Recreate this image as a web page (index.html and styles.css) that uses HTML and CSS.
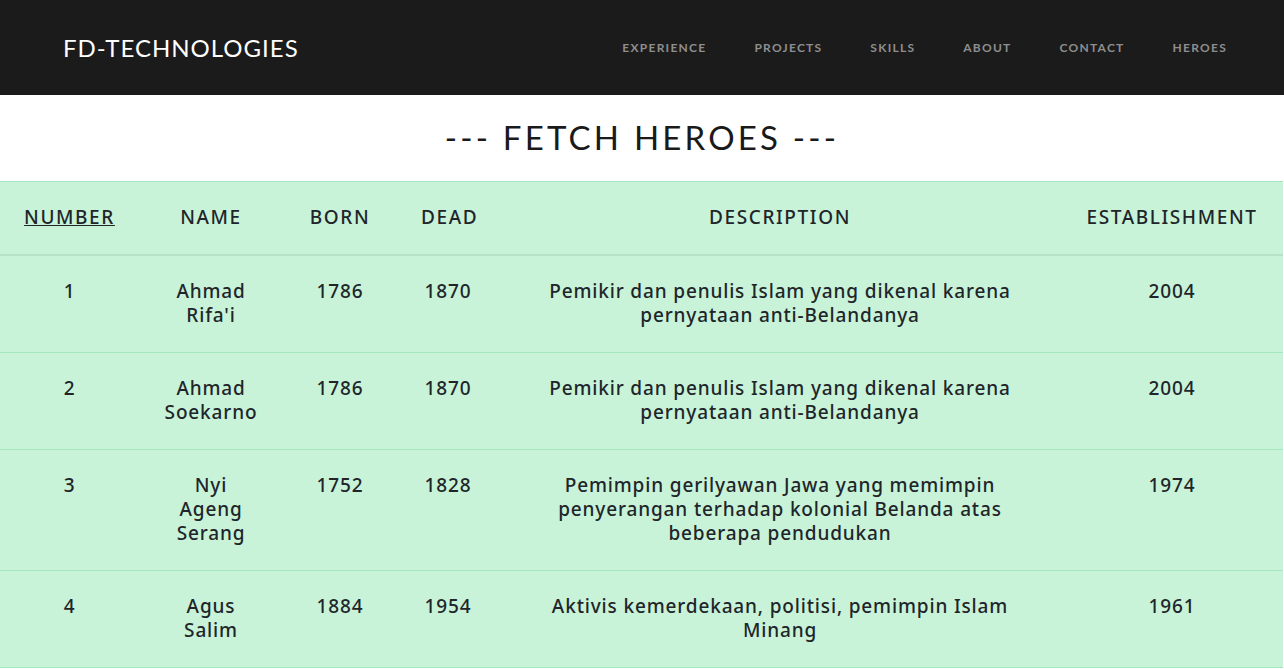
FILE: index.html
```html
<!DOCTYPE html>
<html lang="id">
<head>
<meta charset="utf-8">
<title>FD-Technologies - Heroes</title>
<link rel="stylesheet" href="styles.css">
</head>
<body>
<nav class="navbar">
  <a class="brand" href="#">FD-TECHNOLOGIES</a>
  <ul class="nav-links">
    <li><a href="#">Experience</a></li>
    <li><a href="#">Projects</a></li>
    <li><a href="#">Skills</a></li>
    <li><a href="#">About</a></li>
    <li><a href="#">Contact</a></li>
    <li><a href="#">Heroes</a></li>
  </ul>
</nav>
<h1 class="page-title">--- FETCH HEROES ---</h1>
<table class="heroes">
  <colgroup>
    <col class="c-num"><col class="c-name"><col class="c-born"><col class="c-dead"><col class="c-desc"><col class="c-est">
  </colgroup>
  <thead>
    <tr>
      <th><a href="#" class="sort">Number</a></th>
      <th>Name</th>
      <th>Born</th>
      <th>Dead</th>
      <th>Description</th>
      <th>Establishment</th>
    </tr>
  </thead>
  <tbody>
    <tr>
      <td>1</td>
      <td>Ahmad Rifa'i</td>
      <td>1786</td>
      <td>1870</td>
      <td>Pemikir dan penulis Islam yang dikenal karena pernyataan anti-Belandanya</td>
      <td>2004</td>
    </tr>
    <tr>
      <td>2</td>
      <td>Ahmad Soekarno</td>
      <td>1786</td>
      <td>1870</td>
      <td>Pemikir dan penulis Islam yang dikenal karena pernyataan anti-Belandanya</td>
      <td>2004</td>
    </tr>
    <tr>
      <td>3</td>
      <td>Nyi Ageng Serang</td>
      <td>1752</td>
      <td>1828</td>
      <td>Pemimpin gerilyawan Jawa yang memimpin penyerangan terhadap kolonial Belanda atas beberapa pendudukan</td>
      <td>1974</td>
    </tr>
    <tr>
      <td>4</td>
      <td>Agus Salim</td>
      <td>1884</td>
      <td>1954</td>
      <td>Aktivis kemerdekaan, politisi, pemimpin Islam Minang</td>
      <td>1961</td>
    </tr>
  </tbody>
</table>
</body>
</html>
```

FILE: styles.css
```css
* { box-sizing: border-box; }

html, body {
  margin: 0;
  padding: 0;
  background: #ffffff;
  font-family: "Lato", "Noto Sans", sans-serif;
  color: #212529;
}

.navbar {
  height: 95px;
  background: #1b1b1b;
  display: flex;
  align-items: center;
  justify-content: space-between;
  padding: 0 33px 0 63px;
}

.brand {
  color: #ffffff;
  text-decoration: none;
  font-size: 24px;
  font-weight: 400;
  letter-spacing: 1px;
}

.nav-links {
  list-style: none;
  margin: 0;
  padding: 0;
  display: flex;
}

.nav-links a {
  display: block;
  padding: 0 24px;
  color: #8e8e8e;
  text-decoration: none;
  text-transform: uppercase;
  font-size: 12px;
  font-weight: 700;
  letter-spacing: 1.25px;
  line-height: 16px;
}

.page-title {
  margin: 0;
  height: 86px;
  padding-bottom: 3px;
  display: flex;
  align-items: center;
  justify-content: center;
  font-size: 33px;
  font-weight: 400;
  letter-spacing: 3.2px;
  color: #1a1a1a;
}

.heroes {
  width: 1283px;
  border-collapse: collapse;
  table-layout: fixed;
  background: #c8f3d9;
  border-top: 1px solid #a8e6c2;
  font-family: "Noto Sans", "Lato", sans-serif;
  font-size: 19px;
  font-weight: 500;
  letter-spacing: 0.85px;
  line-height: 24px;
}

.c-num { width: 139px; }
.c-name { width: 144px; }
.c-born { width: 114px; }
.c-dead { width: 102px; }
.c-desc { width: 562px; }
.c-est { width: 222px; }

.heroes th,
.heroes td {
  padding: 23px 24px 25px;
  text-align: center;
  vertical-align: top;
  border-bottom: 1px solid #a3e8bf;
}

.heroes th {
  font-weight: 500;
  letter-spacing: 1.6px;
  text-transform: uppercase;
  border-bottom: 2px solid #b5e2c8;
}

.heroes .sort {
  color: #212529;
  text-decoration: underline;
}
```
